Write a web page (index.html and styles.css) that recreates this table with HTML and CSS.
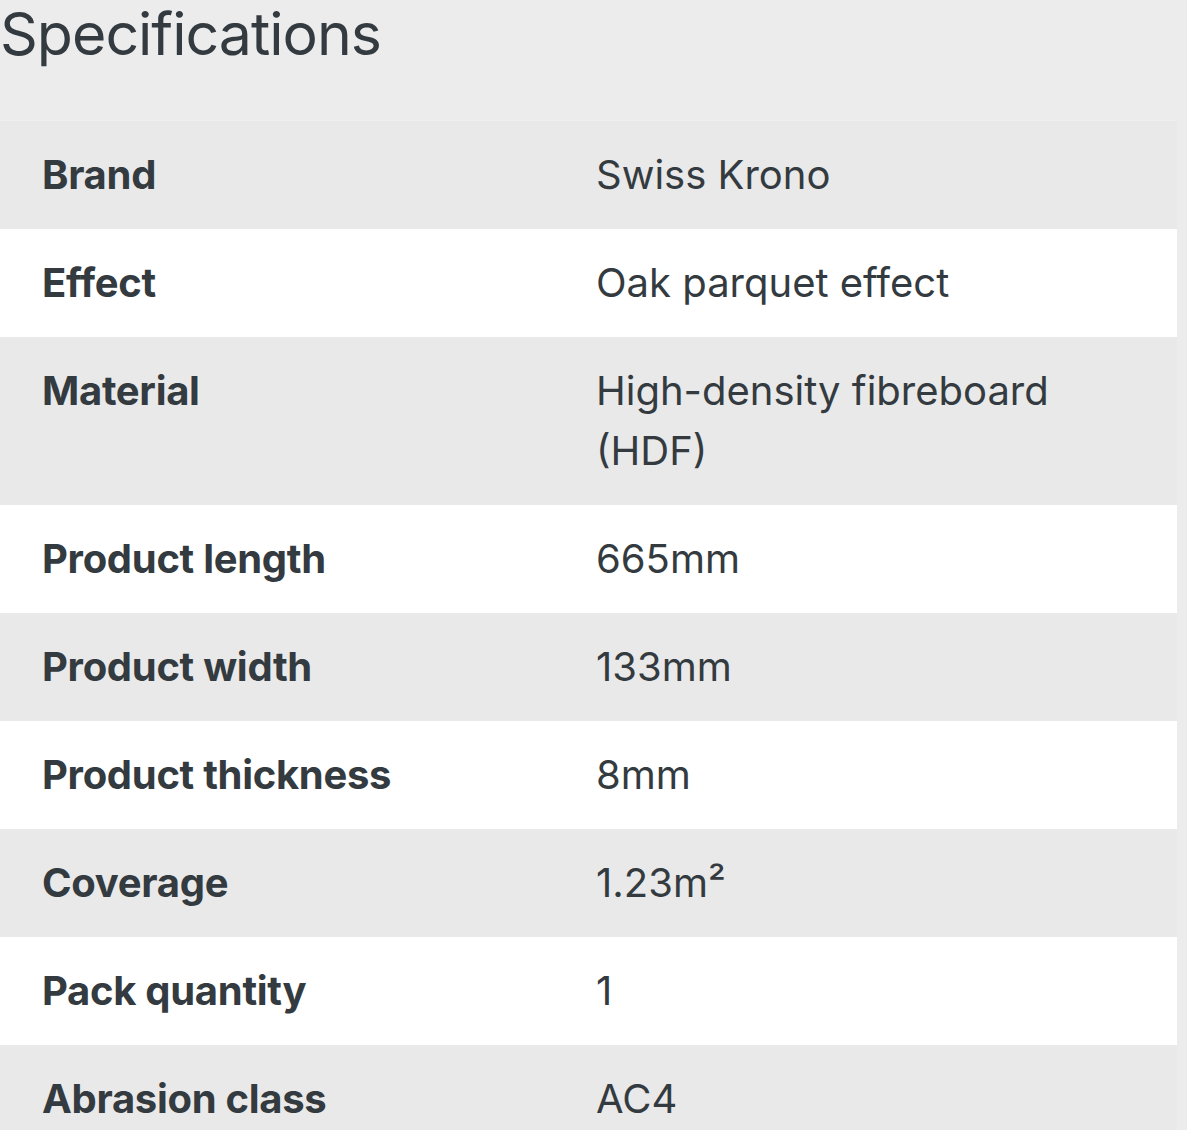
FILE: index.html
```html
<!DOCTYPE html>
<html lang="en">
<head>
<meta charset="utf-8">
<title>Specifications</title>
<link rel="stylesheet" href="styles.css">
</head>
<body>
<section class="specs">
  <h2 class="specs-title">Specifications</h2>
  <div class="specs-table">
    <div class="row"><div class="label">Brand</div><div class="value">Swiss Krono</div></div>
    <div class="row"><div class="label">Effect</div><div class="value">Oak parquet effect</div></div>
    <div class="row"><div class="label">Material</div><div class="value">High-density fibreboard (HDF)</div></div>
    <div class="row"><div class="label">Product length</div><div class="value">665mm</div></div>
    <div class="row"><div class="label">Product width</div><div class="value">133mm</div></div>
    <div class="row"><div class="label">Product thickness</div><div class="value">8mm</div></div>
    <div class="row"><div class="label">Coverage</div><div class="value">1.23m²</div></div>
    <div class="row"><div class="label">Pack quantity</div><div class="value">1</div></div>
    <div class="row"><div class="label">Abrasion class</div><div class="value">AC4</div></div>
  </div>
</section>
</body>
</html>
```

FILE: styles.css
```css
html, body {
  margin: 0;
  padding: 0;
  background: #ececec;
}
body {
  font-family: Inter, "Noto Sans", "Liberation Sans", sans-serif;
  color: #343b40;
  overflow: hidden;
}
.specs {
  width: 1177px;
}
.specs-title {
  margin: 0;
  padding: 0;
  height: 120px;
  font-size: 59px;
  font-weight: 400;
  line-height: 68px;
  letter-spacing: -1px;
}
.specs-table {
  border-top: 1px solid #efefef;
}
.row {
  display: grid;
  grid-template-columns: 596px 1fr;
  background: #e9e9e9;
}
.row:nth-child(even) {
  background: #ffffff;
}
.label, .value {
  font-size: 40px;
  line-height: 60px;
  padding: 24px 0;
}
.label {
  padding-left: 42px;
  font-weight: 700;
  letter-spacing: -0.3px;
}
.value {
  font-weight: 400;
  padding-right: 100px;
}
```
